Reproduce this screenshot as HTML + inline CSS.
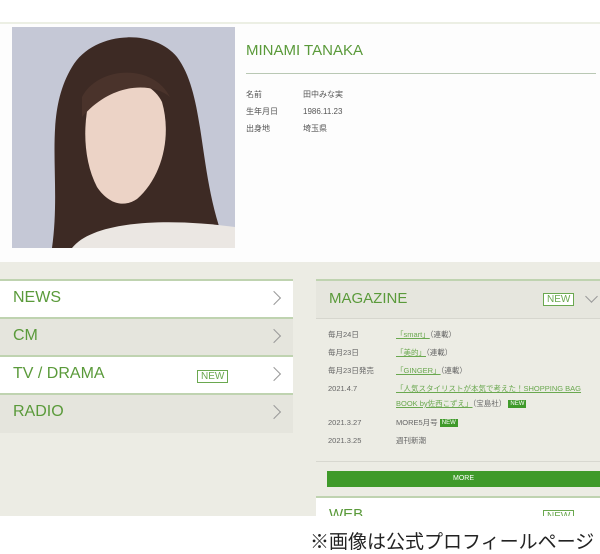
<!DOCTYPE html>
<html><head><meta charset="utf-8"><style>
*{margin:0;padding:0;box-sizing:border-box}
body{width:600px;height:552px;overflow:hidden;background:#fff;font-family:"Liberation Sans","Noto Sans CJK JP",sans-serif;position:relative}
.abs{position:absolute}
.g{color:#5a9a3a}
.row{position:absolute;left:0;width:293px;height:38px;border-top:2px solid #bfd3b0;font-size:16px;color:#5a9a3a;padding:8px 0 0 13px}
.chev{position:absolute;right:14px;top:12px;width:10px;height:10px;border-top:1.5px solid #999;border-right:1.5px solid #999;transform:rotate(45deg)}
.new{position:absolute;border:1px solid #6aa84f;color:#6aa84f;font-size:10px;padding:0 3px;line-height:11px;background:#fff}
.nb{display:inline-block;background:#3f9a2a;color:#fff;font-size:6px;padding:0 2px;line-height:8px;vertical-align:middle}
.mr{position:absolute;left:328px;font-size:7.5px;color:#666;line-height:15px}
.mv{position:absolute;left:396px;font-size:7.5px;color:#666;line-height:15px}
.mv u{color:#6aa84f}
</style></head><body>
<div class="abs" style="left:0;top:22px;width:600px;height:240px;background:#fdfdfd;border-top:2px solid #ecefe4"></div>
<svg class="abs" style="left:12px;top:27px" width="223" height="221" viewBox="0 0 223 221">
<rect width="223" height="221" fill="#c5c8d6"/>
<path d="M40 221 C50 150 30 90 60 40 C80 5 140 0 165 30 C195 70 185 150 215 221 Z" fill="#3d2a24"/>
<path d="M78 70 C90 50 135 45 150 75 C160 110 150 150 125 172 C110 182 95 175 85 160 C72 135 70 100 78 70 Z" fill="#ecd3c6"/>
<path d="M60 221 C80 195 150 190 223 200 L223 221 Z" fill="#ebe7e3"/>
<path d="M70 70 C85 40 140 35 158 70 C140 55 100 55 70 90 Z" fill="#4a332b"/>
</svg>
<div class="abs g" style="left:246px;top:42px;font-size:15px">MINAMI TANAKA</div>
<div class="abs" style="left:246px;top:73px;width:350px;height:1px;background:#b9c8b4"></div>
<div class="abs" style="left:246px;top:86px;font-size:8px;color:#555;line-height:17px">名前<br>生年月日<br>出身地</div>
<div class="abs" style="left:303px;top:86px;font-size:8px;color:#555;line-height:17px">田中みな実<br>1986.11.23<br>埼玉県</div>
<div class="abs" style="left:0;top:262px;width:600px;height:254px;background:#ecece4"></div>
<div class="row" style="top:279px;background:#fff">NEWS<div class="chev"></div></div>
<div class="row" style="top:317px;background:#e5e5dd">CM<div class="chev"></div></div>
<div class="row" style="top:355px;background:#fff">TV / DRAMA<div class="new" style="left:197px;top:13px">NEW</div><div class="chev"></div></div>
<div class="row" style="top:393px;background:#e5e5dd;height:40px">RADIO<div class="chev"></div></div>
<div class="abs" style="left:316px;top:279px;width:284px;height:40px;background:#e6e6de;border-top:2px solid #bfd3b0;border-bottom:1px solid #d6d6ce"></div>
<div class="abs g" style="left:329px;top:290px;font-size:15px">MAGAZINE</div>
<div class="new" style="left:543px;top:293px">NEW</div>
<div class="abs" style="left:587px;top:292px;width:9px;height:9px;border-right:1.5px solid #999;border-bottom:1.5px solid #999;transform:rotate(45deg)"></div>
<div class="mr" style="top:327px">毎月24日</div><div class="mv" style="top:327px"><u>「smart」</u>（連載）</div>
<div class="mr" style="top:345px">毎月23日</div><div class="mv" style="top:345px"><u>「美的」</u>（連載）</div>
<div class="mr" style="top:363px">毎月23日発売</div><div class="mv" style="top:363px"><u>「GINGER」</u>（連載）</div>
<div class="mr" style="top:381px">2021.4.7</div><div class="mv" style="top:381px"><u>「人気スタイリストが本気で考えた！SHOPPING BAG<br>BOOK by佐西こずえ」</u>（宝島社） <span class="nb">NEW</span></div>
<div class="mr" style="top:415px">2021.3.27</div><div class="mv" style="top:415px">MORE5月号 <span class="nb">NEW</span></div>
<div class="mr" style="top:433px">2021.3.25</div><div class="mv" style="top:433px">週刊新潮</div>
<div class="abs" style="left:316px;top:461px;width:284px;height:1px;background:#d8d8d0"></div>
<div class="abs" style="left:327px;top:471px;width:273px;height:16px;background:#3f9a2a;color:#fff;font-size:7px;text-align:center;line-height:16px">MORE</div>
<div class="abs" style="left:316px;top:496px;width:284px;height:20px;background:#fff;border-top:2px solid #bfd3b0;overflow:hidden"><span class="g" style="position:absolute;left:13px;top:8px;font-size:15px">WEB</span><span class="new" style="left:227px;top:12px">NEW</span></div>
<div class="abs" style="left:0;top:516px;width:600px;height:36px;background:#fff"></div>
<div class="abs" style="left:310px;top:527px;font-size:19px;color:#222;white-space:nowrap">※画像は公式プロフィールページ</div>
</body></html>
